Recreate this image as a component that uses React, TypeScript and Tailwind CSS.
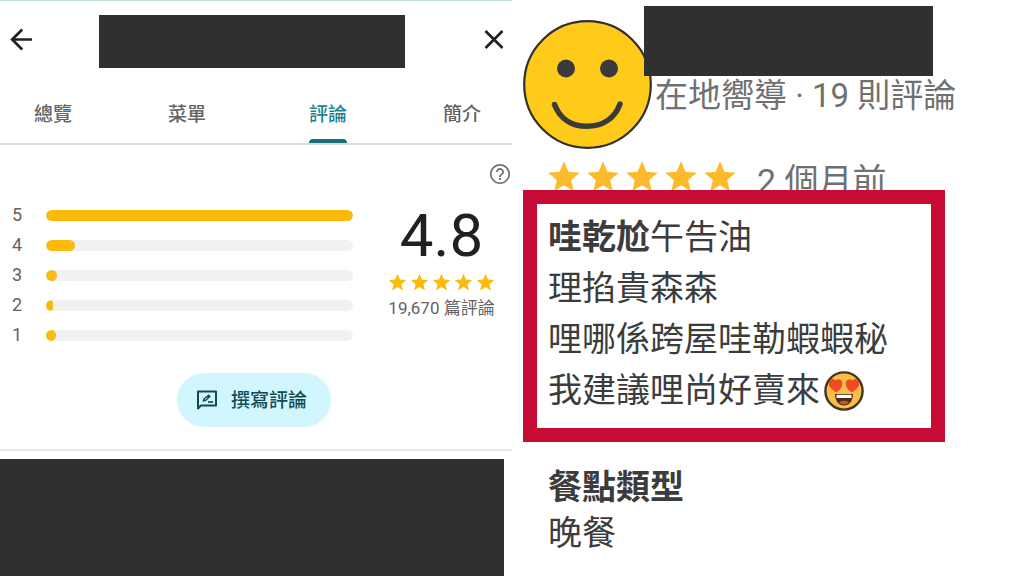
import React from "react";

const STAR =
  "M12 17.27L18.18 21l-1.64-7.03L22 9.24l-7.19-.61L12 2 9.19 8.63 2 9.24l5.46 4.73L5.82 21z";

const tabGroups = [
  ["總覽", "菜單"],
  ["評論", "簡介"],
];

const ratings = [
  { stars: 5, share: 100 },
  { stars: 4, share: 9.5 },
  { stars: 3, share: 3.6 },
  { stars: 2, share: 2.3 },
  { stars: 1, share: 3.3 },
];

function Stars({ className, label }: { className: string; label: string }) {
  return (
    <div className="flex gap-px" role="img" aria-label={label}>
      {[1, 2, 3, 4, 5].map((n) => (
        <svg key={n} viewBox="0 0 24 24" className={className} fill="currentColor">
          <path d={STAR} />
        </svg>
      ))}
    </div>
  );
}

function Smiley() {
  return (
    <svg viewBox="0 0 129 129" className="mt-[14px] h-[129px] w-[129px] shrink-0">
      <circle cx="64.5" cy="64.5" r="63.3" fill="#ffcb1b" stroke="#303030" strokeWidth="2.2" />
      <circle cx="43" cy="48.5" r="9" fill="#3a3a3a" />
      <circle cx="86" cy="48.5" r="9" fill="#3a3a3a" />
      <path
        d="M31.5 84.5C37 99 49 106.300 64 106.300S91.500 99 97 84"
        fill="none"
        stroke="#3a3a3a"
        strokeWidth="5.5"
        strokeLinecap="round"
      />
    </svg>
  );
}

function HeartEyes() {
  return (
    <svg viewBox="0 0 40 40" className="h-10 w-10 shrink-0" role="img" aria-label="heart eyes">
      <circle cx="20" cy="20" r="18.6" fill="#f9bd4a" stroke="#45361d" strokeWidth="2.4" />
      <path
        d="M12.500 20.500C7 17.500 4.800 14.500 5.600 11.300C6.500 8.300 10 8 11.600 10.500C13.800 7.800 17.400 9 17.600 12C17.800 15 15.700 18 12.500 20.500Z"
        fill="#f04a23"
        stroke="#f04a23"
        strokeWidth="1.5"
      />
      <path
        d="M27.500 20.500C33 17.500 35.200 14.500 34.400 11.300C33.500 8.300 30 8 28.400 10.500C26.200 7.800 22.600 9 22.400 12C22.200 15 24.300 18 27.500 20.500Z"
        fill="#f04a23"
        stroke="#f04a23"
        strokeWidth="1.5"
      />
      <path d="M11 23H29C29 30 25 34.500 20 34.500S11 30 11 23Z" fill="#4a2a1c" />
      <path d="M12.500 23.800H27.500V27H12.500Z" fill="#fff" />
      <path d="M15 31.500C17 29.300 23 29.300 25 31.500C23 34 17 34 15 31.500Z" fill="#c8502c" />
    </svg>
  );
}

function PlacePanel() {
  return (
    <section className="flex w-1/2 flex-col">
      <div className="h-px bg-[#c5dcd8]" />
      <header className="flex items-start pt-[14px] pr-2 pl-2">
        <button aria-label="返回" className="mt-3 text-[#202124]">
          <svg viewBox="0 0 26 26" className="h-[26px] w-[26px]" fill="none" stroke="currentColor" strokeWidth="2.7">
            <path d="M24 12.500H5M14.200 2.500L4.200 12.500L14.200 22.500" />
          </svg>
        </button>
        <div className="mr-[79px] ml-[65px] h-[53px] flex-1 bg-[#303030]" />
        <button aria-label="關閉" className="mt-3 text-[#202124]">
          <svg viewBox="0 0 20 24" className="h-6 w-5" fill="none" stroke="currentColor" strokeWidth="2.7">
            <path d="M1.500 4L18.500 21M18.500 4L1.500 21" />
          </svg>
        </button>
      </header>

      <nav className="mt-[29px] flex justify-between border-b-2 border-[#dadada] pr-[31px] pl-[34px]">
        {tabGroups.map((group) => (
          <div key={group[0]} className="flex gap-24">
            {group.map((tab) =>
              tab === "評論" ? (
                <button key={tab} className="flex flex-col text-[19px] leading-9 font-medium text-[#1b8290]">
                  {tab}
                  <span className="mt-[6px] h-1 w-full rounded-t bg-[#187078]" />
                </button>
              ) : (
                <button key={tab} className="flex flex-col text-[19px] leading-9 font-medium text-[#636363]">
                  {tab}
                </button>
              )
            )}
          </div>
        ))}
      </nav>

      <div className="mt-[17px] flex justify-end">
        <button aria-label="說明" className="text-[#707070]">
          <svg viewBox="0 0 24 24" className="h-6 w-6" fill="currentColor">
            <path d="M11 18h2v-2h-2v2zm1-16C6.480 2 2 6.480 2 12s4.480 10 10 10 10-4.480 10-10S17.520 2 12 2zm0 18.300c-4.600 0-8.300-3.700-8.300-8.300S7.400 3.700 12 3.700s8.300 3.700 8.300 8.300-3.700 8.300-8.300 8.300zM12 6c-2.210 0-4 1.790-4 4h1.800c0-1.200 1-2.200 2.200-2.200s2.200 1 2.200 2.200c0 2-3.100 1.750-3.100 5H13c0-2.250 3-2.500 3-5 0-2.210-1.790-4-4-4z" />
          </svg>
        </button>
      </div>

      <div className="mt-[14px] flex pr-4 pl-3">
        <ul className="flex-1">
          {ratings.map((row) => (
            <li key={row.stars} className="flex h-[30px] items-center">
              <span className="w-[34px] text-lg leading-[30px] text-[#636363]">{row.stars}</span>
              <div className="h-[11px] flex-1 overflow-hidden rounded-full bg-[#f1f1f1]">
                <div className="h-full rounded-full bg-[#fbbb0d]" style={{ width: `${row.share}%` }} />
              </div>
            </li>
          ))}
        </ul>
        <div className="ml-[34px] flex flex-col items-center">
          <p className="mt-1 text-[60px] leading-[64px] text-[#202124]">4.8</p>
          <div className="mt-1 text-[#fbbb0d]">
            <Stars className="h-[21px] w-[21px]" label="4.8 顆星" />
          </div>
          <p className="text-[17px] leading-[30px] whitespace-nowrap text-[#636363]">19,670 篇評論</p>
        </div>
      </div>

      <button className="-ml-1 mt-[23px] flex h-[54px] items-center gap-3 self-center rounded-full bg-[#d2f6fd] pr-6 pl-[18px] text-[19px] font-medium text-[#0f4b55]">
        <svg viewBox="0 0 24 24" className="h-6 w-6" fill="none" stroke="currentColor" strokeWidth="2">
          <path d="M3 20.500V3.500H21V17.500H6Z" strokeLinejoin="round" />
          <path d="M7.500 13.800L8.300 10.800L13.700 6.200L15.900 8.500L10.700 13.200Z" fill="currentColor" stroke="none" />
          <path d="M9.800 11.800L12.300 9.500" stroke="#d2f6fd" strokeWidth="1" />
          <path d="M13 14H18" strokeWidth="1.700" />
        </svg>
        <span className="pt-[2px]">撰寫評論</span>
      </button>

      <div className="mt-[22px] h-[2px] bg-[#e8e8e8]" />
      <div className="mt-2 mr-2 h-[117px] bg-[#303030]" />
    </section>
  );
}

function ReviewPanel() {
  return (
    <section className="flex w-1/2 flex-col pl-[11px]">
      <header className="flex pt-[6px]">
        <Smiley />
        <div className="z-10 -ml-2">
          <div className="h-[70px] w-[289px] bg-[#303030]" />
          <p className="pl-[11px] text-[33px] leading-10 whitespace-nowrap text-[#707070]">
            在地嚮導 · 19 則評論
          </p>
        </div>
      </header>

      <div className="flex h-[41px] items-start pt-[9px] pl-[22px]">
        <div className="text-[#fdba2c]">
          <Stars className="h-[38px] w-[38px]" label="5 顆星" />
        </div>
        <p className="ml-[18px] text-[34px] leading-[46px] text-[#707070]">2 個月前</p>
      </div>

      <article className="relative mr-[79px] border-[14px] border-[#c60c35] bg-white pt-2 pb-3 pl-[11px] text-[34px] leading-[51px] whitespace-nowrap text-[#3c3c3c]">
        <p>
          <b>哇乾尬</b>午告油
        </p>
        <p>理掐貴森森</p>
        <p>哩哪係跨屋哇勒蝦蝦秘</p>
        <p className="flex items-center">
          我建議哩尚好賣來
          <span className="ml-1">
            <HeartEyes />
          </span>
        </p>
      </article>

      <div className="mt-[22px] pl-[25px] text-[34px] leading-[46px] text-[#3c3c3c]">
        <h3 className="font-bold">餐點類型</h3>
        <p>晚餐</p>
      </div>
    </section>
  );
}

export default function App() {
  return (
    <main className="flex w-full overflow-hidden bg-white font-[Roboto,'Noto_Sans_CJK_TC',sans-serif]">
      <PlacePanel />
      <ReviewPanel />
    </main>
  );
}
